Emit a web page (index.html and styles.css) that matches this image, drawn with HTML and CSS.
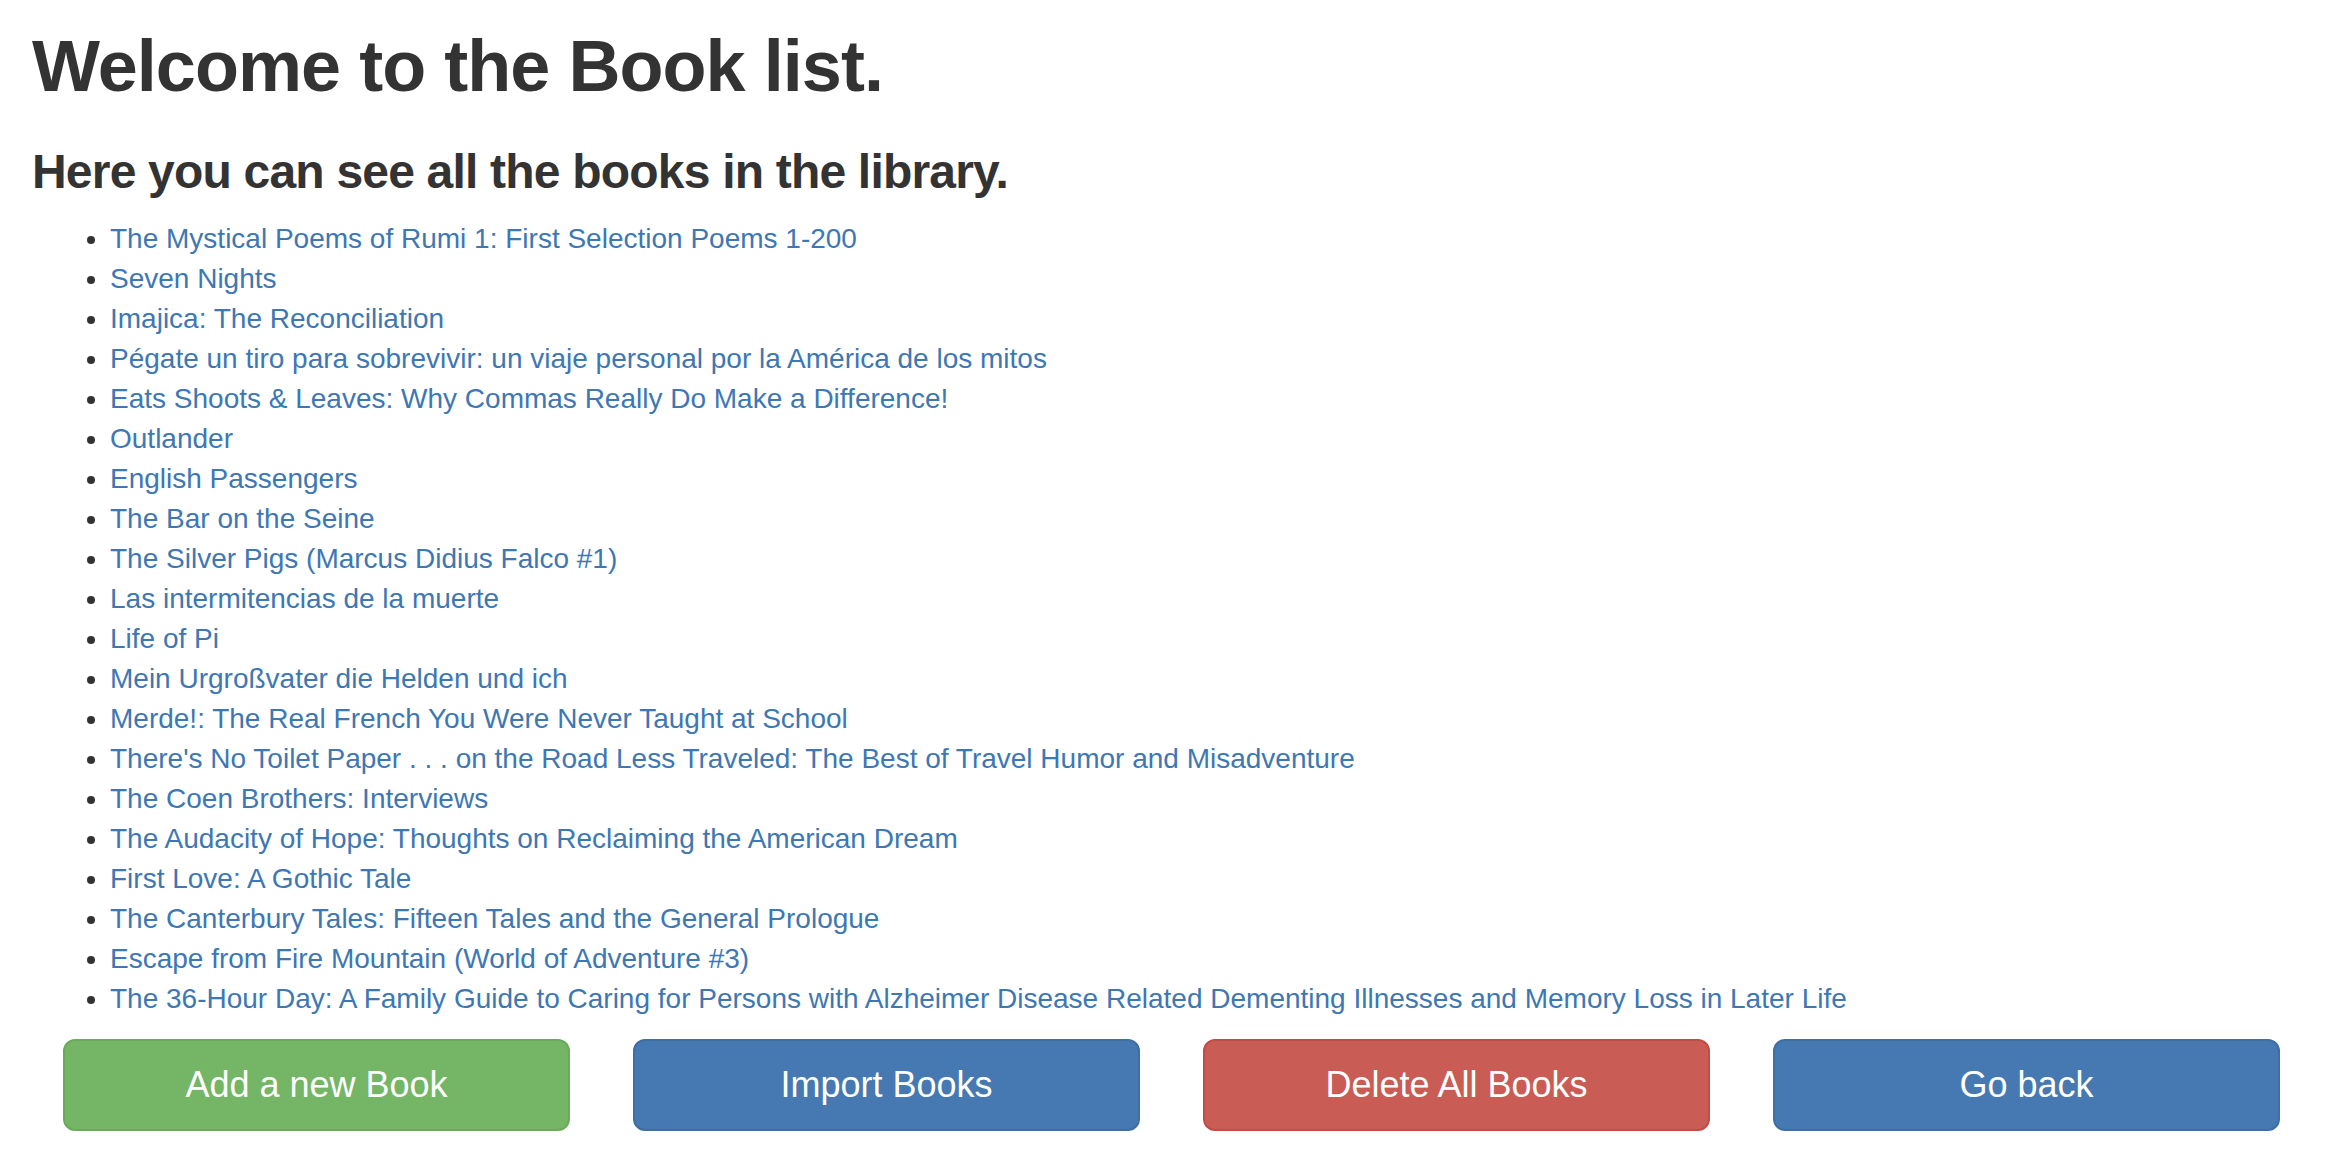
FILE: index.html
```html
<!DOCTYPE html>
<html lang="en">
<head>
<meta charset="utf-8">
<title>Book list</title>
<link rel="stylesheet" href="styles.css">
</head>
<body>
<div class="container">
  <h1 class="title">Welcome to the Book list.</h1>
  <h3 class="subtitle">Here you can see all the books in the library.</h3>
  <ul class="books">
    <li><a href="#">The Mystical Poems of Rumi 1: First Selection Poems 1-200</a></li>
    <li><a href="#">Seven Nights</a></li>
    <li><a href="#">Imajica: The Reconciliation</a></li>
    <li><a href="#">Pégate un tiro para sobrevivir: un viaje personal por la América de los mitos</a></li>
    <li><a href="#">Eats Shoots &amp; Leaves: Why Commas Really Do Make a Difference!</a></li>
    <li><a href="#">Outlander</a></li>
    <li><a href="#">English Passengers</a></li>
    <li><a href="#">The Bar on the Seine</a></li>
    <li><a href="#">The Silver Pigs (Marcus Didius Falco #1)</a></li>
    <li><a href="#">Las intermitencias de la muerte</a></li>
    <li><a href="#">Life of Pi</a></li>
    <li><a href="#">Mein Urgroßvater die Helden und ich</a></li>
    <li><a href="#">Merde!: The Real French You Were Never Taught at School</a></li>
    <li><a href="#">There's No Toilet Paper . . . on the Road Less Traveled: The Best of Travel Humor and Misadventure</a></li>
    <li><a href="#">The Coen Brothers: Interviews</a></li>
    <li><a href="#">The Audacity of Hope: Thoughts on Reclaiming the American Dream</a></li>
    <li><a href="#">First Love: A Gothic Tale</a></li>
    <li><a href="#">The Canterbury Tales: Fifteen Tales and the General Prologue</a></li>
    <li><a href="#">Escape from Fire Mountain (World of Adventure #3)</a></li>
    <li><a href="#">The 36-Hour Day: A Family Guide to Caring for Persons with Alzheimer Disease Related Dementing Illnesses and Memory Loss in Later Life</a></li>
  </ul>
  <div class="actions">
    <a href="#" class="btn btn-success">Add a new Book</a>
    <a href="#" class="btn btn-primary">Import Books</a>
    <a href="#" class="btn btn-danger">Delete All Books</a>
    <a href="#" class="btn btn-primary">Go back</a>
  </div>
</div>
</body>
</html>
```

FILE: styles.css
```css
html, body {
  margin: 0;
  padding: 0;
  background: #fff;
}

body {
  font-family: "Liberation Sans", Arial, sans-serif;
  font-size: 28px;
  line-height: 40px;
  color: #333333;
}

.container {
  padding: 0 30px;
}

.title {
  font-size: 72px;
  line-height: 1.1;
  font-weight: 700;
  letter-spacing: -0.95px;
  margin: 27px 0 20px;
  padding-left: 2px;
}

.subtitle {
  font-size: 48px;
  line-height: 1.1;
  font-weight: 700;
  letter-spacing: -0.8px;
  margin: 40px 0 20px;
  padding-left: 2px;
}

.books {
  margin: 0 0 20px;
  padding-left: 80px;
}

.books a {
  color: #3d77b4;
  text-decoration: none;
}

.actions {
  display: grid;
  grid-template-columns: repeat(4, 507px);
  column-gap: 63px;
  padding-left: 33px;
}

.btn {
  display: block;
  box-sizing: border-box;
  height: 92px;
  padding: 20px 32px;
  font-size: 36px;
  line-height: 48px;
  text-align: center;
  color: #ffffff;
  text-decoration: none;
  border: 2px solid transparent;
  border-radius: 12px;
}

.btn-success {
  background: #74b566;
  border-color: #69ab5b;
}

.btn-primary {
  background: #4679b1;
  border-color: #3f6ea2;
}

.btn-danger {
  background: #c95c54;
  border-color: #c24d44;
}
```
